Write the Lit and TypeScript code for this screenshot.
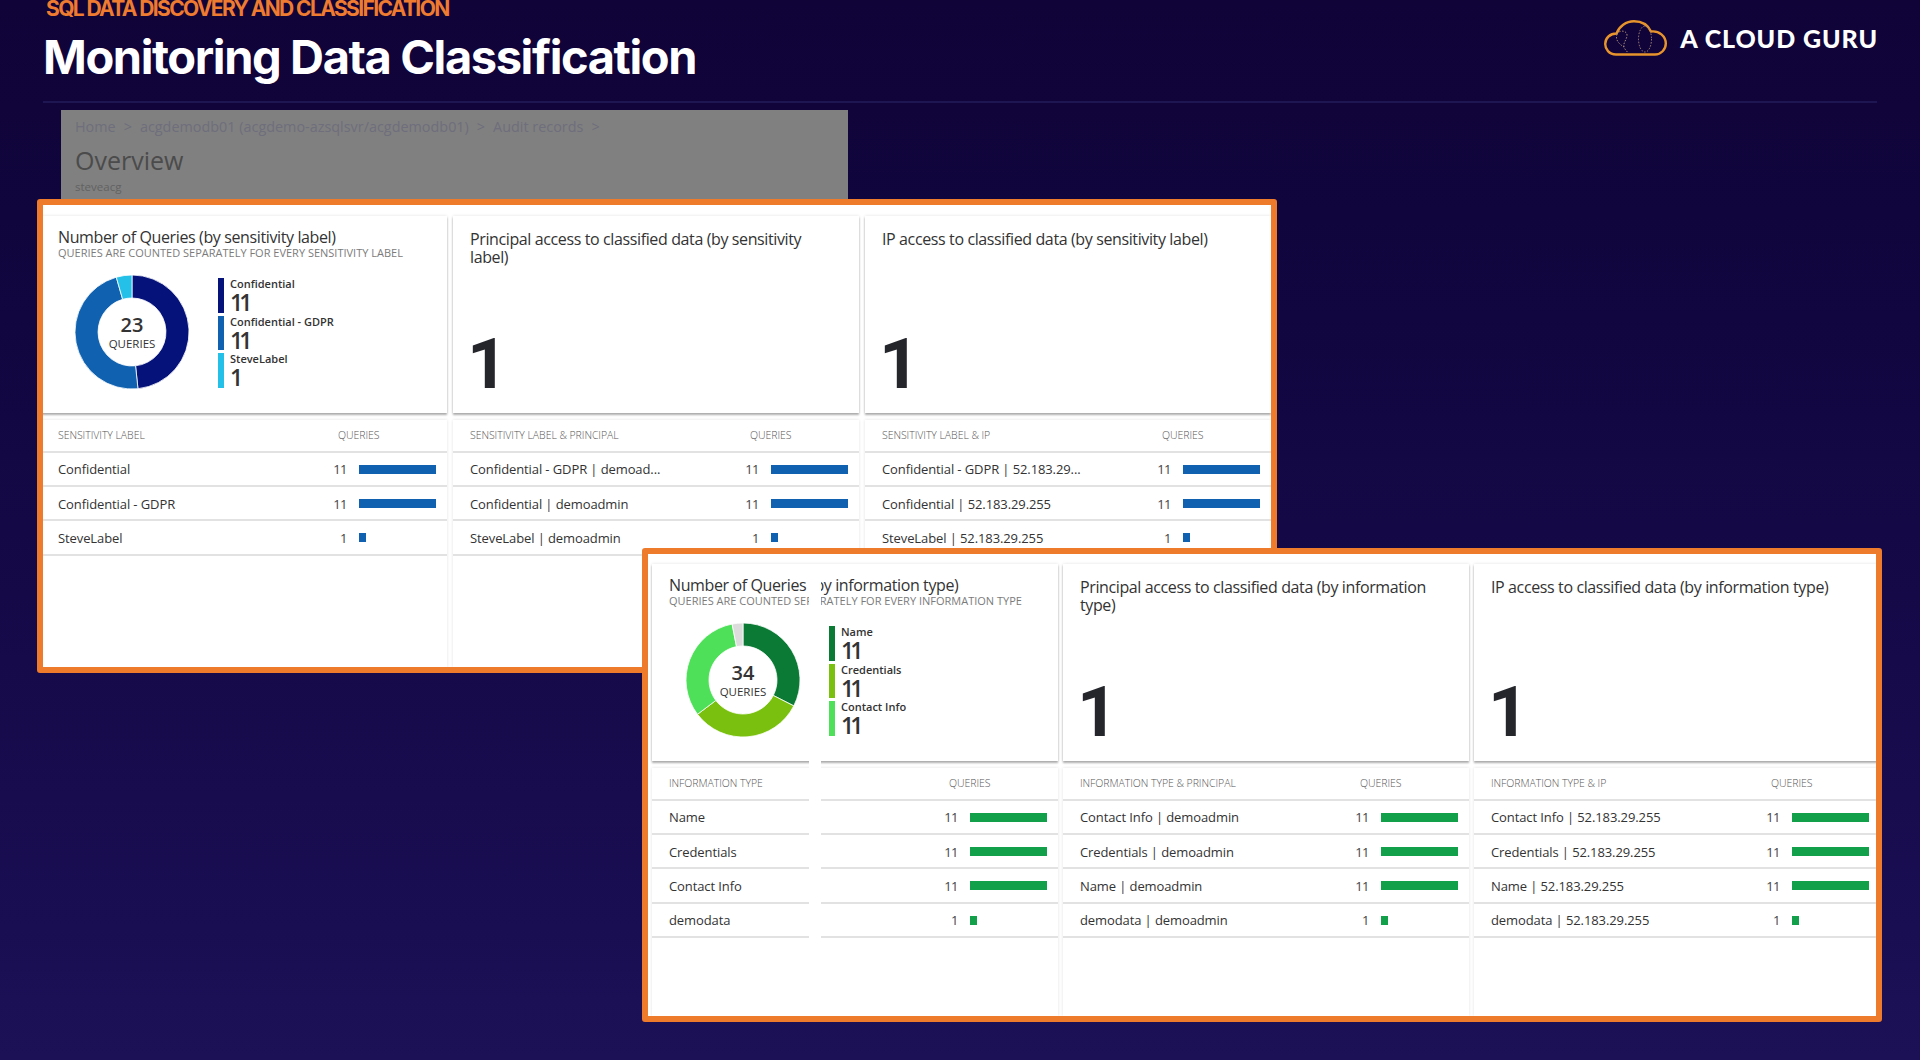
import { LitElement, html, css, svg } from "lit";
import { customElement } from "lit/decorators.js";

type Row = [string, number];
type Seg = { name: string; value: number; color: string; arc: number };

const NAVY = "#05127a";
const BLUE = "#1062b0";
const SKY = "#25c0e8";

const sensitivityRows: Row[][] = [
  [["Confidential", 11], ["Confidential - GDPR", 11], ["SteveLabel", 1]],
  [["Confidential - GDPR | demoad...", 11], ["Confidential | demoadmin", 11], ["SteveLabel | demoadmin", 1]],
  [["Confidential - GDPR | 52.183.29...", 11], ["Confidential | 52.183.29.255", 11], ["SteveLabel | 52.183.29.255", 1]],
];

const infoRows: Row[][] = [
  [["Name", 11], ["Credentials", 11], ["Contact Info", 11], ["demodata", 1]],
  [["Contact Info | demoadmin", 11], ["Credentials | demoadmin", 11], ["Name | demoadmin", 11], ["demodata | demoadmin", 1]],
  [["Contact Info | 52.183.29.255", 11], ["Credentials | 52.183.29.255", 11], ["Name | 52.183.29.255", 11], ["demodata | 52.183.29.255", 1]],
];

const sensitivitySegs: Seg[] = [
  { name: "Confidential", value: 11, color: NAVY, arc: 174 },
  { name: "Confidential - GDPR", value: 11, color: BLUE, arc: 170 },
  { name: "SteveLabel", value: 1, color: SKY, arc: 16 },
];

const infoSegs: Seg[] = [
  { name: "Name", value: 11, color: "#0b7a35", arc: 117 },
  { name: "Credentials", value: 11, color: "#7ac10f", arc: 116 },
  { name: "Contact Info", value: 11, color: "#4fe05a", arc: 116 },
  { name: "", value: 1, color: "#dcdcdc", arc: 11 },
];

function point(deg: number, r: number) {
  const a = ((deg - 90) * Math.PI) / 180;
  return `${(57 + r * Math.cos(a)).toFixed(2)} ${(57 + r * Math.sin(a)).toFixed(2)}`;
}

function arcPath(start: number, end: number) {
  const large = end - start > 180 ? 1 : 0;
  return `M${point(start, 57)} A57 57 0 ${large} 1 ${point(end, 57)} L${point(end, 34)} A34 34 0 ${large} 0 ${point(start, 34)} Z`;
}

@customElement("app-root")
export class AppRoot extends LitElement {
  static styles = css`
    :host {
      display: block;
      width: 1920px;
      height: 1060px;
      overflow: hidden;
      background: linear-gradient(180deg, #0f0338 0%, #140846 50%, #1c1057 100%);
      font-family: "Open Sans", "Noto Sans", sans-serif;
    }

    .header {
      display: flex;
      justify-content: space-between;
      height: 101px;
      margin: 0 43px;
      border-bottom: 2px solid #1e1553;
      box-sizing: content-box;
    }

    .eyebrow {
      margin: -3px 0 0 3px;
      color: #ee7b30;
      font: 700 21px/24px Inter, sans-serif;
      letter-spacing: -1.62px;
    }

    .title {
      margin: 7px 0 0 0;
      color: #fff;
      font: 700 47px/58px Inter, sans-serif;
      letter-spacing: -1.4px;
    }

    .logo {
      display: flex;
      align-items: center;
      gap: 13px;
      height: 36px;
      margin: 20px -1px 0 0;
      color: #fff;
      font: 900 25px/36px Lato, sans-serif;
      letter-spacing: 0.9px;
    }

    .shot {
      width: 787px;
      height: 90px;
      margin: 7px 0 0 61px;
      padding: 7px 14px 0;
      box-sizing: border-box;
      background: #808080;
      overflow: hidden;
    }

    .crumbs {
      display: flex;
      gap: 8px;
      color: #6e6e7c;
      font-size: 14.4px;
      line-height: 20px;
    }

    .shot h2 {
      margin: 6px 0 0 0;
      color: #4b4b4b;
      font-size: 25px;
      font-weight: 500;
      line-height: 34px;
    }

    .shot small {
      display: block;
      margin-top: 2px;
      color: #626262;
      font-size: 11.5px;
      line-height: 16px;
    }

    .panel {
      position: relative;
      display: flex;
      width: 1240px;
      height: 474px;
      box-sizing: border-box;
      border: 6px solid #ee7a2c;
      border-radius: 3px;
      background: #fff;
      overflow: hidden;
    }

    .panel-a {
      gap: 6px;
      margin: -1px 0 0 37px;
    }

    .panel-a .tile:first-child {
      margin-left: -2px;
    }

    .panel-b {
      gap: 5px;
      margin: -125px 0 0 642px;
      padding-left: 4px;
    }

    .tile {
      display: flex;
      flex: 0 0 406px;
      flex-direction: column;
      gap: 7px;
      padding-top: 11px;
    }

    .panel-b .tile {
      padding-top: 10px;
    }

    .card {
      height: 197px;
      flex: none;
      box-sizing: border-box;
      padding: 14px 17px 0;
      box-shadow: 0 0 3px rgba(0, 0, 0, 0.12), 0 2px 2px rgba(0, 0, 0, 0.3);
    }

    .card h3 {
      margin: 0;
      color: #333;
      font-size: 16px;
      font-weight: 400;
      line-height: 18px;
      letter-spacing: -0.38px;
    }

    .card.chart {
      padding-top: 12px;
    }

    .card p {
      margin: 0;
      color: #7b7b7b;
      font-size: 11px;
      line-height: 13px;
    }

    .big {
      margin: 81px 0 0 -3px;
      color: #24262c;
      font: 700 71px/70px Roboto, sans-serif;
    }

    .big.wrapped {
      margin-top: 63px;
    }

    .chart-body {
      display: flex;
      align-items: flex-start;
      gap: 29px;
      margin: 16px 0 0 17px;
    }

    .donut {
      position: relative;
      width: 114px;
      height: 114px;
      flex: none;
    }

    .donut svg {
      display: block;
    }

    .donut-text {
      position: absolute;
      inset: 0;
      display: flex;
      flex-direction: column;
      align-items: center;
      justify-content: center;
      color: #333;
    }

    .donut-text b {
      font-size: 20px;
      font-weight: 600;
      line-height: 24px;
    }

    .donut-text span {
      font-size: 11.5px;
      line-height: 14px;
    }

    .legend {
      display: flex;
      flex-direction: column;
      gap: 3px;
      margin-top: 3px;
    }

    .legend-item {
      display: flex;
      gap: 6px;
      height: 34.5px;
    }

    .swatch {
      width: 6px;
      flex: none;
    }

    .legend-item span {
      display: block;
      color: #333;
      font-size: 11px;
      font-weight: 600;
      line-height: 12px;
    }

    .legend-item b {
      display: block;
      margin-top: 1px;
      color: #333;
      font-size: 23px;
      font-weight: 600;
      line-height: 22px;
      letter-spacing: -4px;
    }

    .table {
      flex: 1;
      box-shadow: 0 0 3px rgba(0, 0, 0, 0.12);
    }

    .row {
      display: grid;
      grid-template-columns: 1fr 31px 77px;
      column-gap: 12px;
      align-items: center;
      height: 34.3px;
      box-sizing: border-box;
      padding: 1px 11px 0 17px;
      border-bottom: 2px solid #e2e2e2;
      color: #333;
      font-size: 13px;
      letter-spacing: -0.1px;
    }

    .row.head {
      height: 32.7px;
      padding-top: 0;
      color: #555;
      font-size: 10.5px;
      font-weight: 300;
      letter-spacing: -0.05px;
    }

    .row.head span:last-child {
      grid-column: 2 / 4;
      margin-left: 22px;
    }

    .count {
      text-align: right;
      color: #444;
      letter-spacing: -0.5px;
    }

    .bar {
      display: block;
      height: 9px;
    }

    .mask {
      position: absolute;
      top: 22px;
      left: 161px;
      width: 12px;
      height: 370px;
      background: #fff;
    }
  `;

  renderDonut(segs: Seg[], total: number) {
    let at = 0;
    const paths = segs.map((s) => {
      const start = at;
      at += s.arc;
      return svg`<path d=${arcPath(start, at)} fill=${s.color} stroke="#fff" stroke-width="0.8"></path>`;
    });
    return html`
      <div class="donut">
        <svg width="114" height="114" viewBox="0 0 114 114">${paths}</svg>
        <div class="donut-text"><b>${total}</b><span>QUERIES</span></div>
      </div>
    `;
  }

  renderChart(title: string, sub: string, segs: Seg[], total: number) {
    return html`
      <div class="card chart">
        <h3>${title}</h3>
        <p>${sub}</p>
        <div class="chart-body">
          ${this.renderDonut(segs, total)}
          <div class="legend">
            ${segs.filter((s) => s.name).map(
              (s) => html`
                <div class="legend-item">
                  <div class="swatch" style="background:${s.color}"></div>
                  <div><span>${s.name}</span><b>${s.value}</b></div>
                </div>
              `
            )}
          </div>
        </div>
      </div>
    `;
  }

  renderStat(title: string, wrapped = false) {
    return html`
      <div class="card">
        <h3>${title}</h3>
        <div class="big ${wrapped ? "wrapped" : ""}">1</div>
      </div>
    `;
  }

  renderTable(head: string, rows: Row[], color: string) {
    return html`
      <div class="table">
        <div class="row head"><span>${head}</span><span>QUERIES</span></div>
        ${rows.map(
          ([label, n]) => html`
            <div class="row">
              <span>${label}</span>
              <span class="count">${n}</span>
              <span class="bar" style="width:${n === 1 ? 7 : 77}px;background:${color}"></span>
            </div>
          `
        )}
      </div>
    `;
  }

  renderLogo() {
    return html`
      <svg width="63" height="36" viewBox="0 0 63 36" fill="none">
        <path
          d="M12 34.5C5 34.5 1.2 29 1.2 24C1.2 18 6 13.5 12.5 13.5C15 6.5 22 1.2 30 1.2C38 1.2 44 5 47 11.5C55 10.5 61.8 16 61.8 23.5C61.8 29.5 57 34.5 51 34.5Z"
          stroke="#e8942c"
          stroke-width="2.4"
        ></path>
        <g stroke="#a98a78" stroke-width="1" stroke-dasharray="1.5 1.5">
          <ellipse cx="41" cy="19" rx="6.5" ry="13"></ellipse>
          <path d="M13 14C16 9 24 11 23 16C22 21 19 23 20 27C21 30 23 31 24 33M13 14C11 20 15 24 20 27"></path>
        </g>
      </svg>
    `;
  }

  render() {
    return html`
      <div class="header">
        <div>
          <div class="eyebrow">SQL DATA DISCOVERY AND CLASSIFICATION</div>
          <h1 class="title">Monitoring Data Classification</h1>
        </div>
        <div class="logo">${this.renderLogo()}<span>A CLOUD GURU</span></div>
      </div>

      <div class="shot">
        <div class="crumbs">
          <span>Home</span><span>&gt;</span>
          <span>acgdemodb01 (acgdemo-azsqlsvr/acgdemodb01)</span><span>&gt;</span>
          <span>Audit records</span><span>&gt;</span>
        </div>
        <h2>Overview</h2>
        <small>steveacg</small>
      </div>

      <div class="panel panel-a">
        <div class="tile">
          ${this.renderChart(
            "Number of Queries (by sensitivity label)",
            "QUERIES ARE COUNTED SEPARATELY FOR EVERY SENSITIVITY LABEL",
            sensitivitySegs,
            23
          )}
          ${this.renderTable("SENSITIVITY LABEL", sensitivityRows[0], BLUE)}
        </div>
        <div class="tile">
          ${this.renderStat("Principal access to classified data (by sensitivity label)", true)}
          ${this.renderTable("SENSITIVITY LABEL & PRINCIPAL", sensitivityRows[1], BLUE)}
        </div>
        <div class="tile">
          ${this.renderStat("IP access to classified data (by sensitivity label)")}
          ${this.renderTable("SENSITIVITY LABEL & IP", sensitivityRows[2], BLUE)}
        </div>
      </div>

      <div class="panel panel-b">
        <div class="tile">
          ${this.renderChart(
            "Number of Queries (by information type)",
            "QUERIES ARE COUNTED SEPARATELY FOR EVERY INFORMATION TYPE",
            infoSegs,
            34
          )}
          ${this.renderTable("INFORMATION TYPE", infoRows[0], "#12a04a")}
        </div>
        <div class="tile">
          ${this.renderStat("Principal access to classified data (by information type)", true)}
          ${this.renderTable("INFORMATION TYPE & PRINCIPAL", infoRows[1], "#12a04a")}
        </div>
        <div class="tile">
          ${this.renderStat("IP access to classified data (by information type)")}
          ${this.renderTable("INFORMATION TYPE & IP", infoRows[2], "#12a04a")}
        </div>
        <div class="mask"></div>
      </div>
    `;
  }
}
